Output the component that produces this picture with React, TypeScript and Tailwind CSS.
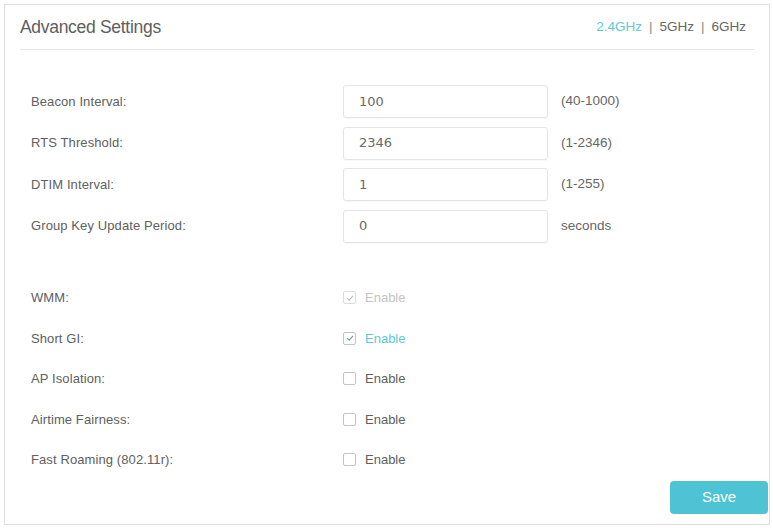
import React from 'react';

const inputs = [
  { label: 'Beacon Interval:', value: '100', hint: '(40-1000)' },
  { label: 'RTS Threshold:', value: '2346', hint: '(1-2346)' },
  { label: 'DTIM Interval:', value: '1', hint: '(1-255)' },
  { label: 'Group Key Update Period:', value: '0', hint: 'seconds' },
];

type CheckState = 'disabled' | 'checked' | 'off';

const checks: { label: string; state: CheckState }[] = [
  { label: 'WMM:', state: 'disabled' },
  { label: 'Short GI:', state: 'checked' },
  { label: 'AP Isolation:', state: 'off' },
  { label: 'Airtime Fairness:', state: 'off' },
  { label: 'Fast Roaming (802.11r):', state: 'off' },
];

const Tick: React.FC<{ color: string }> = ({ color }) => (
  <svg viewBox="0 0 12 12" className="h-[10px] w-[10px]">
    <path d="M2.5 6.2 L5 8.6 L9.6 3.4" fill="none" stroke={color} strokeWidth="1.4" />
  </svg>
);

const Box: React.FC<{ state: CheckState }> = ({ state }) => (
  <span
    className={`flex h-[13px] w-[13px] items-center justify-center rounded-[2px] border ${
      state === 'disabled' ? 'border-[#dcdcdc]' : 'border-[#c4c4c4]'
    }`}
  >
    {state === 'disabled' && <Tick color="#bdbdbd" />}
    {state === 'checked' && <Tick color="#7a9aa0" />}
  </span>
);

export default function App() {
  return (
    <div className="h-[528px] w-[773px] bg-white p-[4px] pr-[3px] pb-[3px] font-['Liberation_Sans',Arial,sans-serif]">
      <div className="flex h-full flex-col border border-[#dedede]">
        <div className="mx-[15px] flex h-[45px] shrink-0 items-center justify-between border-b border-[#e6e6e6] pr-[8px]">
          <span className="text-[17.5px] tracking-[-0.3px] text-[#5e5e5e]">Advanced Settings</span>
          <span className="flex items-center gap-[7px] text-[13.5px] text-[#666]">
            <span className="text-[#5ccbd6]">2.4GHz</span>
            <span className="text-[#888]">|</span>
            <span>5GHz</span>
            <span className="text-[#888]">|</span>
            <span>6GHz</span>
          </span>
        </div>

        <div className="mt-[35px] flex shrink-0 flex-col gap-[8.5px] pl-[26px]">
          {inputs.map((r) => (
            <div key={r.label} className="flex h-[33px] items-center">
              <span className="w-[312px] text-[13px] tracking-[0.1px] text-[#606060]">{r.label}</span>
              <div className="flex h-[33px] w-[205px] items-center rounded-[3px] border border-[#e4e4e4] pl-[15px] font-['DejaVu_Sans',sans-serif] text-[13px] text-[#6a6a6a] shadow-[0_1px_1px_rgba(0,0,0,0.03)]">
                {r.value}
              </div>
              <span className="ml-[13px] text-[13.5px] text-[#666]">{r.hint}</span>
            </div>
          ))}
        </div>

        <div className="mt-[35px] flex shrink-0 flex-col pl-[26px]">
          {checks.map((c) => (
            <div key={c.label} className="flex h-[40.5px] items-center">
              <span className="w-[312px] text-[13px] tracking-[0.1px] text-[#606060]">{c.label}</span>
              <Box state={c.state} />
              <span
                className={`ml-[9px] text-[13px] ${
                  c.state === 'disabled'
                    ? 'text-[#c4c4c4]'
                    : c.state === 'checked'
                      ? 'text-[#5ccbd6]'
                      : 'text-[#606060]'
                }`}
              >
                Enable
              </span>
            </div>
          ))}
        </div>

        <div className="mt-auto mb-[10px] flex shrink-0 justify-end pr-[1px]">
          <button className="h-[33px] w-[98px] rounded-[4px] bg-[#4ec3d3] text-[15px] text-white">
            Save
          </button>
        </div>
      </div>
    </div>
  );
}
